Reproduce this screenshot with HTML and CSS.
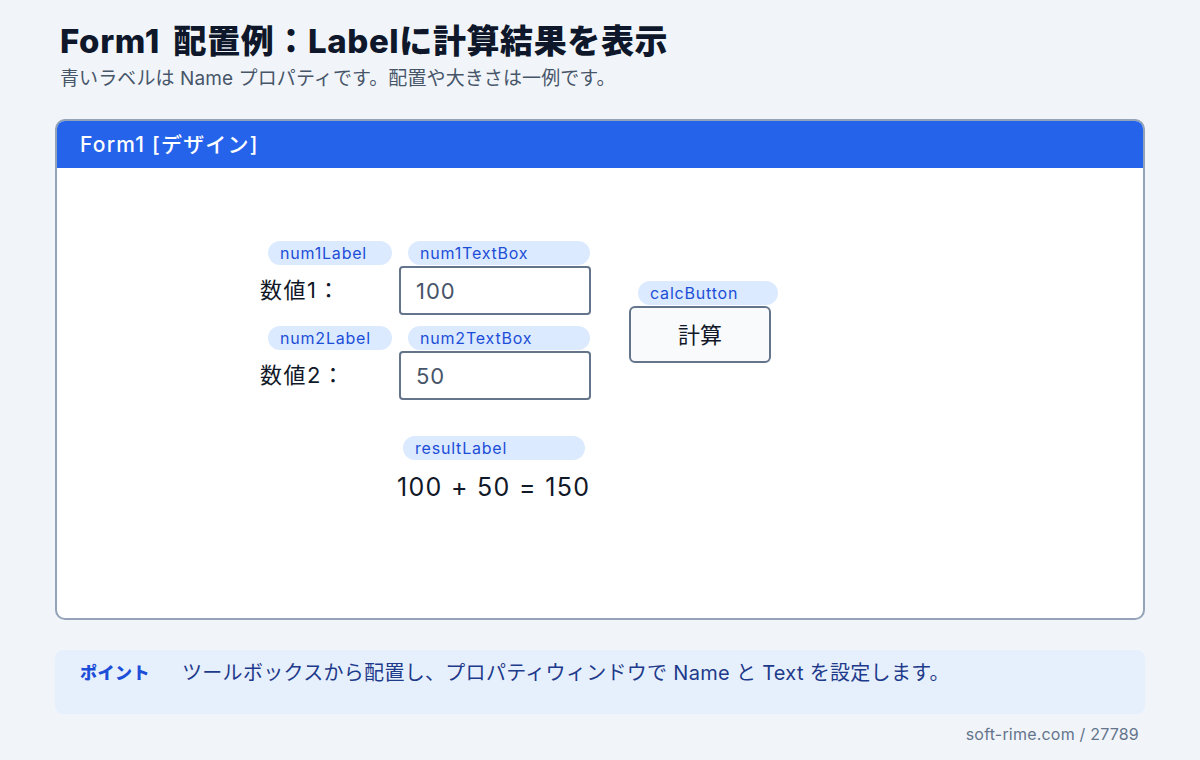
FILE: index.html
```html
<!DOCTYPE html>
<html lang="ja">
<head>
    <meta charset="UTF-8">
    <title>Form1 配置例</title>
    <link rel="stylesheet" href="styles.css">
</head>
<body>

<div class="page">
    <div class="head">
        <h1 class="title">Form1 配置例：Labelに計算結果を表示</h1>
        <p class="subtitle">青いラベルは Name プロパティです。配置や大きさは一例です。</p>
    </div>

    <div class="formWindow">
        <div class="formTitle">Form1 [デザイン]</div>
        <div class="designCanvas">
            <!-- 1行目 -->
            <span class="nameTag" style="left:211px;top:73px;width:124px;">num1Label</span>
            <span class="nameTag" style="left:351px;top:73px;width:182px;">num1TextBox</span>
            <div class="caption" style="left:203px;top:107px;">数値1：</div>
            <div class="textBox" style="left:342px;top:98px;">100</div>

            <!-- 2行目 -->
            <span class="nameTag" style="left:211px;top:158px;width:124px;">num2Label</span>
            <span class="nameTag" style="left:351px;top:158px;width:182px;">num2TextBox</span>
            <div class="caption" style="left:203px;top:192px;">数値2：</div>
            <div class="textBox" style="left:342px;top:183px;">50</div>

            <!-- ボタン -->
            <span class="nameTag" style="left:581px;top:113px;width:140px;">calcButton</span>
            <div class="calcButton" style="left:572px;top:138px;">計算</div>

            <!-- 結果 -->
            <span class="nameTag" style="left:346px;top:268px;width:182px;">resultLabel</span>
            <div class="result" style="left:340px;top:302px;">100 + 50 = 150</div>
        </div>
    </div>

    <div class="point">
        <span class="pointHead">ポイント</span>
        <span class="pointText">ツールボックスから配置し、プロパティウィンドウで Name と Text を設定します。</span>
    </div>

    <div class="credit">soft-rime.com / 27789</div>
</div>

</body>
</html>
```

FILE: styles.css
```css
body {
    margin: 0;
    background: #f1f5fa;
    font-family: Inter, "Noto Sans CJK JP", sans-serif;
    color: #0f172a;
}

.page {
    width: 1090px;
    padding: 20px 55px 0;
}

.head {
    padding-left: 5px;
}

.title {
    margin: 0;
    font-size: 33px;
    font-weight: 800;
    line-height: 42px;
    color: #0f172a;
    letter-spacing: 0.6px;
    word-spacing: 6px;
}

.subtitle {
    margin: 4px 0 0;
    font-size: 19px;
    line-height: 26px;
    color: #475569;
    letter-spacing: 0.1px;
}

/* フォームの枠 */
.formWindow {
    margin-top: 27px;
    height: 497px;
    background: #ffffff;
    border: 2px solid #94a3b8;
    border-radius: 10px;
    overflow: hidden;
    display: flex;
    flex-direction: column;
}

.formTitle {
    height: 47px;
    background: #2563eb;
    color: #ffffff;
    font-size: 21px;
    letter-spacing: 1.2px;
    line-height: 47px;
    padding-left: 23px;
    font-weight: 500;
}

.designCanvas {
    position: relative;
    flex: 1;
}

.nameTag {
    position: absolute;
    height: 24px;
    line-height: 24px;
    box-sizing: border-box;
    padding-left: 12px;
    border-radius: 12px;
    background: #dbeafe;
    color: #1d4ed8;
    font-size: 16px;
    letter-spacing: 0.8px;
}

.caption {
    position: absolute;
    font-size: 22px;
    line-height: 30px;
    letter-spacing: 1.5px;
    color: #111827;
}

.textBox {
    position: absolute;
    width: 192px;
    height: 49px;
    box-sizing: border-box;
    border: 2px solid #64748b;
    border-radius: 4px;
    padding-left: 15px;
    font-size: 22px;
    letter-spacing: 1px;
    line-height: 47px;
    color: #475569;
}

.calcButton {
    position: absolute;
    width: 142px;
    height: 57px;
    box-sizing: border-box;
    border: 2px solid #64748b;
    border-radius: 6px;
    background: #f8fafc;
    text-align: center;
    font-size: 22px;
    line-height: 54px;
    color: #111827;
}

.result {
    position: absolute;
    font-size: 25px;
    letter-spacing: 1.3px;
    line-height: 34px;
    color: #111827;
}

/* ポイント欄 */
.point {
    margin-top: 30px;
    height: 64px;
    box-sizing: border-box;
    padding: 10px 25px;
    background: #e6f0fd;
    border-radius: 8px;
    display: flex;
    gap: 32px;
}

.pointHead {
    font-size: 17px;
    font-weight: 800;
    color: #1d4ed8;
    letter-spacing: 0.5px;
    line-height: 26px;
}

.pointText {
    font-size: 20px;
    color: #1e3a8a;
    letter-spacing: 0.3px;
    line-height: 26px;
}

.credit {
    margin-top: 10px;
    text-align: right;
    padding-right: 6px;
    font-size: 16px;
    letter-spacing: 0.2px;
    color: #64748b;
}
```
